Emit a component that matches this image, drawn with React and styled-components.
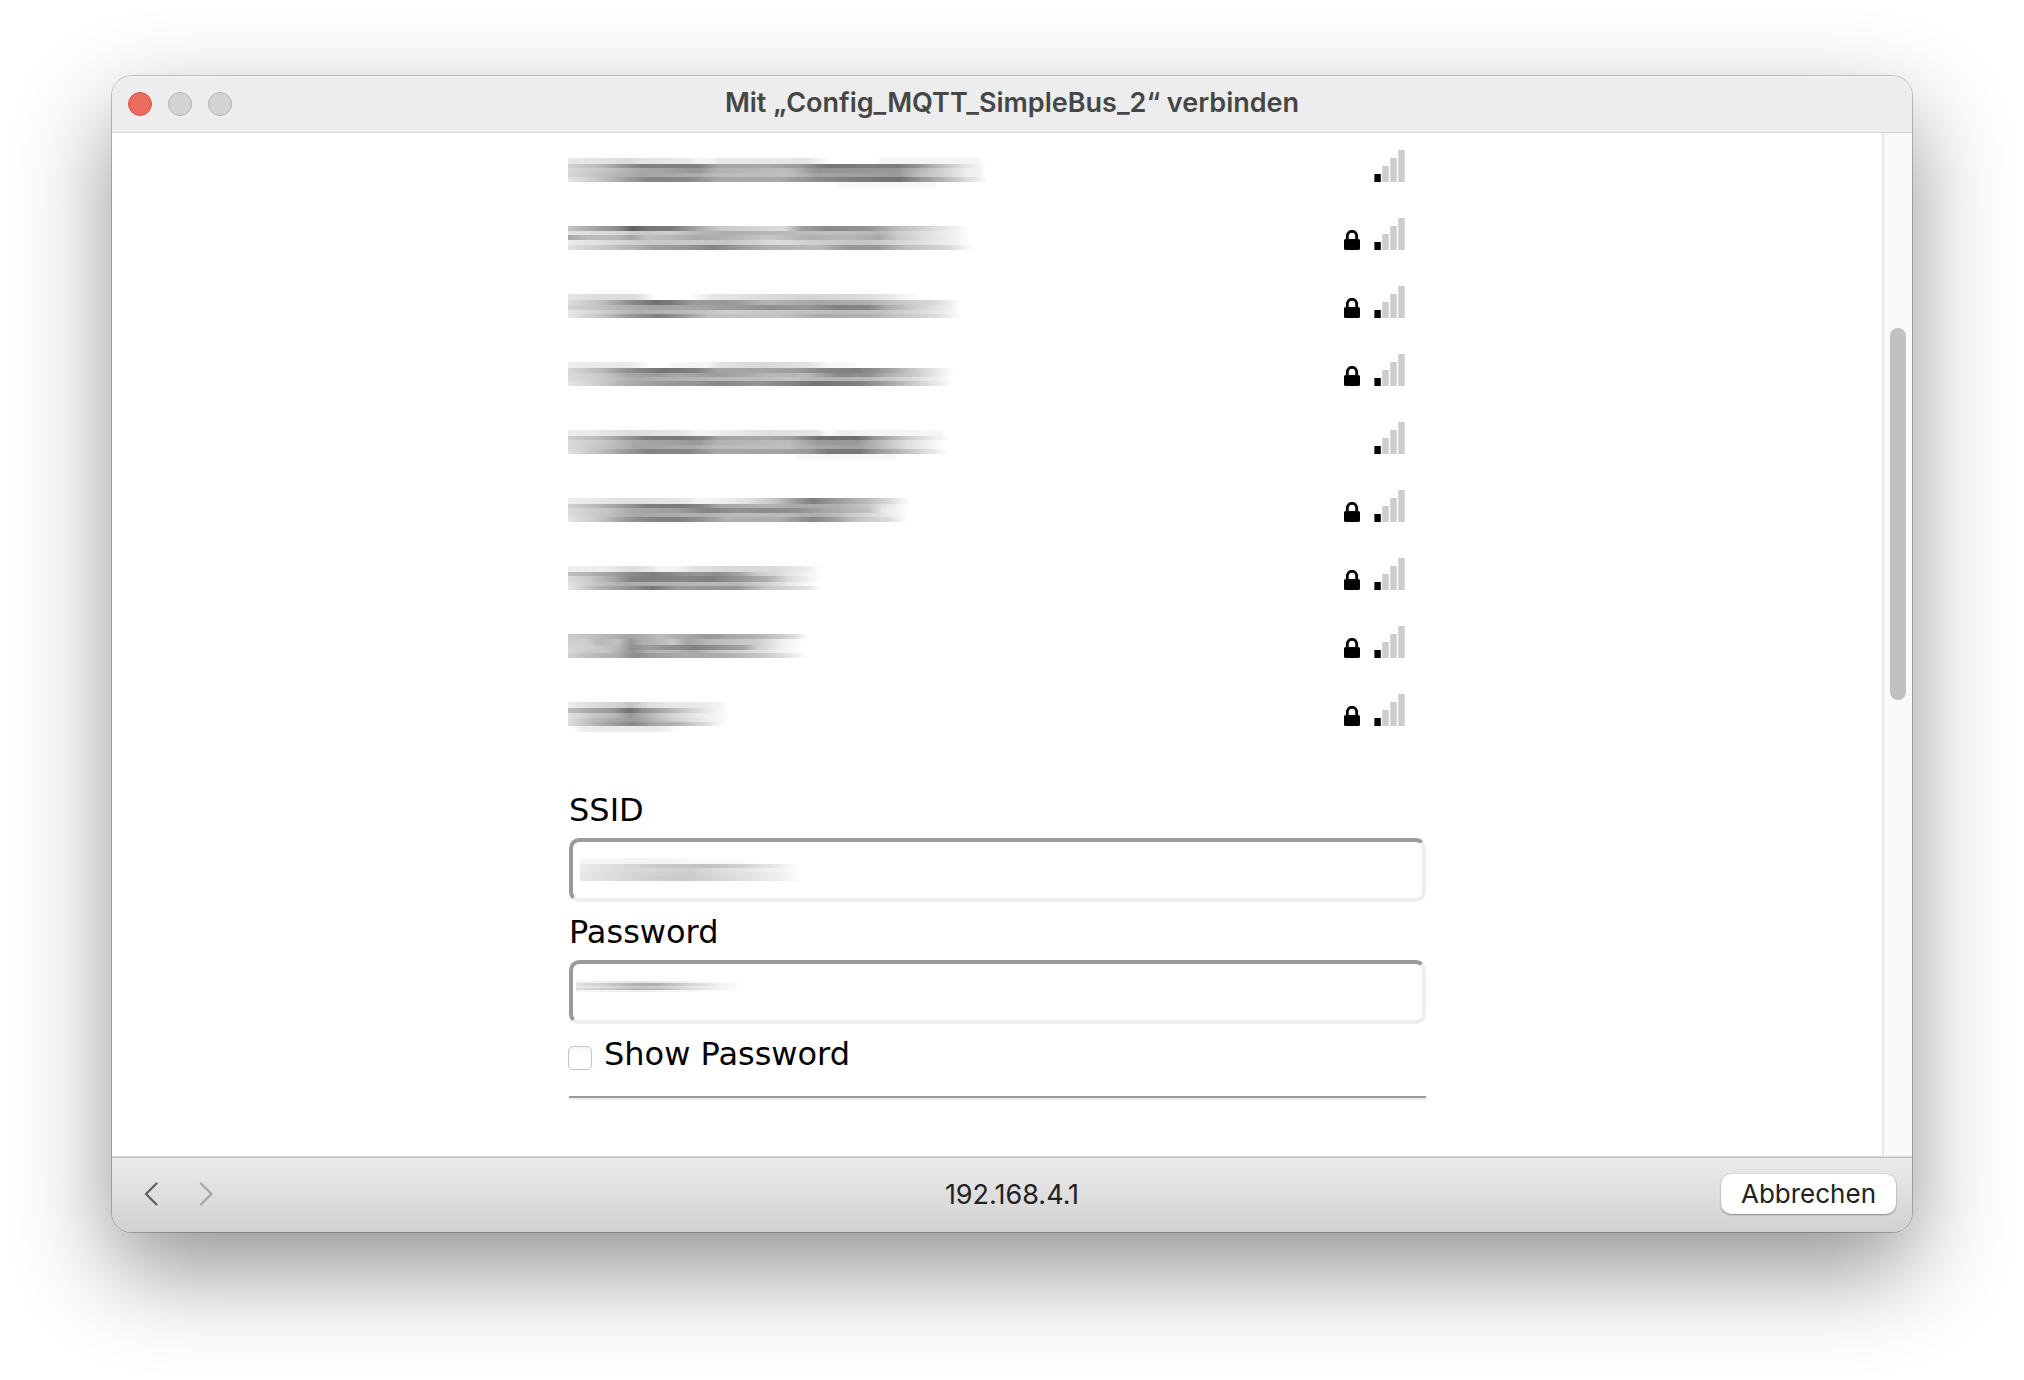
import React, { useState } from "react";
import styled, { createGlobalStyle } from "styled-components";

const GlobalStyle = createGlobalStyle`
  *, *::before, *::after { box-sizing: border-box; }
  body { margin: 0; background: #fff; }
`;

const systemFont = `Inter, "Liberation Sans", sans-serif`;
const pageFont = `Verdana, "DejaVu Sans", sans-serif`;

const Desktop = styled.div`
  display: flex;
  min-height: 100vh;
  padding: 76px 112px 148px;
  background: #fff;
`;

const Window = styled.div`
  flex: 1;
  min-width: 0;
  display: flex;
  flex-direction: column;
  overflow: hidden;
  border-radius: 20px;
  background: #fff;
  font-family: ${systemFont};
  box-shadow: 0 0 0 1px rgba(0, 0, 0, 0.22), 0 38px 96px rgba(0, 0, 0, 0.43);
`;

const TitleBar = styled.header`
  display: grid;
  grid-template-columns: 1fr auto 1fr;
  align-items: center;
  height: 57px;
  padding: 0 16px;
  background: #ededed;
  border-bottom: 1px solid #d4d4d4;
  box-shadow: inset 0 1px 0 #f8f8f8;
`;

const TrafficLights = styled.div`
  display: flex;
  gap: 16px;
`;

const Light = styled.button`
  width: 24px;
  height: 24px;
  padding: 0;
  border-radius: 50%;
  border: 1px solid ${(p) => (p.$active ? "#d5564c" : "#b4b4b4")};
  background: ${(p) => (p.$active ? "#ec6b5f" : "#d3d3d3")};
`;

const Title = styled.h1`
  margin: 0;
  padding-bottom: 2px;
  font-size: 27px;
  line-height: 32px;
  font-weight: 600;
  color: #464646;
  white-space: nowrap;
`;

const Content = styled.div`
  flex: 1;
  display: flex;
  min-height: 0;
`;

const Viewport = styled.main`
  flex: 1;
  display: flex;
  justify-content: center;
  font-family: ${pageFont};
  font-size: 32px;
  line-height: 38px;
  color: #000;
`;

const Column = styled.div`
  width: 858px;
`;

const ScrollTrack = styled.div`
  width: 30px;
  padding: 195px 6px 0;
  background: #fafafa;
  border-left: 2px solid #e8e8e8;
`;

const ScrollThumb = styled.div`
  height: 372px;
  border-radius: 8px;
  background: #c1c1c1;
`;

const Networks = styled.ul`
  margin: 0 0 46px;
  padding: 0;
  list-style: none;
`;

const Network = styled.li`
  display: flex;
  align-items: flex-end;
  gap: 14px;
  height: 68px;
  padding: 0 20px 19px 0;
`;

const Smear = styled.div`
  display: flex;
  flex-direction: column;
  flex: 1;
  height: 24px;
`;

const Band = styled.div`
  flex: none;
  height: ${(p) => p.$height}px;
`;

const Form = styled.form`
  margin: 0;
`;

const Label = styled.label`
  display: block;
  padding-left: 1px;
`;

const Field = styled.div`
  position: relative;
  margin: 9px 0 11px;
  padding-left: 1px;
`;

const TextInput = styled.input`
  display: block;
  width: 100%;
  height: 64px;
  padding: 0 8px;
  border: 4px solid;
  border-color: #9a9a9a #eee #eee #9a9a9a;
  border-radius: 10px;
  background: #fff;
  font: inherit;
  outline: none;
`;

const FieldSmear = styled.div`
  position: absolute;
  top: 20px;
  left: ${(p) => p.$left}px;
  width: ${(p) => p.$width}px;
  pointer-events: none;
`;

const CheckRow = styled.div`
  display: flex;
  gap: 12px;
  align-items: flex-start;
`;

const Checkbox = styled.input`
  appearance: none;
  flex: none;
  width: 24px;
  height: 24px;
  margin: 11px 0 0;
  border: 1px solid #c4c4c4;
  border-radius: 5px;
  background: linear-gradient(#f6f6f6, #fff 35%);
  &:checked { background: #3b82f6; }
`;

const Rule = styled.hr`
  margin: 23px 0 0 1px;
  border: 0;
  border-top: 2px solid #9a9a9a;
  border-bottom: 2px solid #eee;
`;

const Footer = styled.footer`
  display: grid;
  grid-template-columns: 1fr auto 1fr;
  align-items: center;
  height: 75px;
  padding: 0 16px;
  border-top: 1px solid #bfbfbf;
  background: linear-gradient(#ebebeb, #d2d2d2);
  box-shadow: 0 -1px 0 #dedede;
`;

const History = styled.nav`
  display: flex;
  gap: 30px;
  padding: 0 0 3px 12px;
`;

const IconButton = styled.button`
  display: flex;
  padding: 0;
  border: 0;
  background: none;
  color: ${(p) => (p.disabled ? "#a6a6a6" : "#5e5e5e")};
`;

const Address = styled.span`
  font-size: 27px;
  line-height: 32px;
  color: #222;
`;

const CancelButton = styled.button`
  justify-self: end;
  height: 40px;
  margin-bottom: 3px;
  padding: 0 20px;
  border: 0;
  border-radius: 10px;
  background: #fff;
  box-shadow: 0 1px 2px rgba(0, 0, 0, 0.35), 0 0 1px rgba(0, 0, 0, 0.25);
  font-family: inherit;
  font-size: 26px;
  line-height: 38px;
  color: #222;
`;

/* Each band is [height, "x grey, x grey, ..."], x in pixels from the left. */
const networks = [
  {
    locked: false,
    bands: [
      [6, "0 e8,30 e4,62 da,75 e4,120 e8,128 f4,146 f3,150 e8,240 e6,264 fe,308 ff,314 f4,410 f4,415 ff"],
      [4, "0 d2,30 bc,60 90,75 80,130 80,150 a6,200 a8,230 9c,260 76,300 80,330 7a,350 94,370 b8,395 e0,421 ff"],
      [5, "0 da,40 c4,70 aa,130 96,150 b2,220 bc,250 92,330 98,350 b4,380 d8,400 ee,412 f2,416 ff"],
      [4, "0 d6,40 bc,70 a6,130 ac,150 bc,220 c0,250 a4,330 9c,350 bc,380 d8,400 f0,412 f2,416 ff"],
      [5, "0 e4,30 c8,60 9c,80 86,120 88,150 a6,210 a8,250 8c,290 7c,330 72,350 90,390 cc,421 ff"],
      [6, "268 ff,272 f7,365 f7,370 ff"],
    ],
  },
  {
    locked: true,
    bands: [
      [5, "0 c4,30 a0,50 8c,64 62,80 76,105 7c,125 a0,150 c8,215 dc,235 9e,260 8a,300 94,330 bc,370 e0,402 ff"],
      [4, "0 e4,55 d4,65 c8,100 cc,130 b8,160 ac,220 ba,280 c0,310 b4,330 cc,360 e2,385 f0,402 ff"],
      [5, "0 a8,20 bc,50 b8,63 a4,80 c0,130 aa,160 b2,200 c8,240 b0,280 b8,310 a8,330 c8,360 e0,380 ea,400 ff"],
      [5, "0 ec,50 d8,80 c8,120 c8,160 c4,210 dc,250 cc,300 c4,330 d4,360 e4,385 f0,402 ff"],
      [5, "0 e0,30 cc,65 b4,85 9e,120 96,145 82,165 94,200 b0,250 ba,280 96,310 98,340 c0,380 d8,406 ff"],
    ],
  },
  {
    locked: true,
    bands: [
      [6, "0 e6,30 dc,68 dc,88 ff,120 ff,145 e6,200 dc,240 d4,300 dc,320 e6,352 ff"],
      [5, "0 dc,30 c4,60 90,75 7e,90 70,110 82,125 9c,160 98,200 b4,250 a6,300 b0,340 cc,370 dc,394 ff"],
      [5, "0 d4,30 c4,65 ac,90 a2,120 a8,160 9c,200 90,240 96,270 80,300 86,320 aa,350 d0,380 ee,394 ff"],
      [4, "0 e8,40 cc,70 b0,110 b8,160 ce,220 c4,270 bc,310 c0,350 da,380 f0,392 ff"],
      [4, "0 e8,30 c8,60 9c,90 80,110 92,140 c0,210 c4,250 ac,300 b0,330 c4,370 dc,394 ff"],
    ],
  },
  {
    locked: true,
    bands: [
      [6, "0 ec,60 e8,82 ff,98 ff,105 f6,140 f4,152 e2,195 d8,240 e2,262 f8,284 f8,290 ff"],
      [5, "0 d8,30 bc,60 90,85 7c,95 74,130 82,150 a4,200 a4,230 9c,260 84,290 7e,320 a0,350 d0,386 ff"],
      [4, "0 dc,30 cc,60 a8,90 9c,110 a8,150 9c,200 b6,240 b8,270 88,300 90,320 b0,350 d0,386 ff"],
      [4, "0 dc,30 cc,70 ac,110 b0,150 b8,220 c4,260 b4,300 b8,340 d8,370 f0,384 ff"],
      [5, "0 e6,30 ce,60 ac,100 98,130 92,150 88,190 94,220 86,250 74,290 80,320 a4,350 d0,386 ff"],
    ],
  },
  {
    locked: false,
    bands: [
      [6, "0 ee,30 e8,62 dc,120 e8,128 f4,146 f2,154 ec,200 e0,250 e6,260 fa,275 ee,300 f4,372 f6,378 ff"],
      [4, "0 d0,30 ba,60 94,80 7c,110 78,135 86,150 a4,200 a8,225 9c,250 72,290 6e,310 9c,340 cc,382 ff"],
      [5, "0 dc,40 c4,65 a8,130 98,150 b2,220 bc,250 9a,290 98,310 b8,340 e0,360 ee,375 ff"],
      [4, "0 da,40 c0,70 a4,130 ac,150 bc,220 c0,250 a6,290 a0,310 b8,340 e0,360 f0,375 ff"],
      [5, "0 e0,30 c0,60 98,80 84,120 86,150 a6,210 a4,240 98,260 7a,290 76,310 98,340 c4,382 ff"],
      [6, "226 ff,230 f7,326 f7,330 ff"],
    ],
  },
  {
    locked: true,
    bands: [
      [6, "0 ee,30 e8,62 de,120 e8,128 f4,150 f2,180 e0,205 c8,225 a0,245 7e,265 98,300 bc,320 d8,342 ff"],
      [4, "0 d0,30 b8,60 96,80 7e,110 7a,135 86,150 a6,200 b4,230 a8,270 b0,300 c8,320 e8,342 ff"],
      [5, "0 dc,40 c4,65 a8,110 9c,140 84,170 90,200 8c,230 90,260 a8,300 c0,315 e8,342 ff"],
      [4, "0 dc,40 c0,70 a8,130 b0,170 bc,220 b8,250 ac,280 c8,310 e0,342 ff"],
      [5, "0 e4,30 c8,60 98,80 86,110 80,130 90,160 b0,210 ac,245 88,265 9c,290 c4,320 dc,340 ff"],
    ],
  },
  {
    locked: true,
    bands: [
      [6, "0 f0,40 ec,62 dc,85 e8,92 f4,110 f2,126 e2,160 d8,210 dc,236 ea,254 ff"],
      [4, "0 c0,30 ac,60 8e,85 7c,110 90,130 96,150 8e,170 a0,190 cc,220 e4,254 ff"],
      [6, "0 dc,20 cc,50 9e,63 84,80 80,115 86,145 80,170 94,200 b0,220 d8,240 f0,254 ff"],
      [4, "0 e4,30 c4,60 ac,90 b0,130 b8,170 b8,200 d4,230 f0,250 ff"],
      [4, "0 e8,30 b4,60 94,85 78,110 9c,140 94,170 98,200 c8,240 e2,254 ff"],
    ],
  },
  {
    locked: true,
    bands: [
      [5, "0 ce,30 be,60 a4,70 a8,90 bc,115 ac,140 98,160 a6,190 b4,215 cc,230 e4,240 ff"],
      [6, "0 d0,20 ce,30 b8,50 c0,63 98,75 b0,90 b8,105 c8,120 a4,140 b8,170 c4,190 d0,215 f0,238 ff"],
      [5, "0 d4,20 d0,50 b8,64 90,80 9c,110 8c,125 80,145 8c,175 a4,190 d0,215 f2,234 ff"],
      [3, "0 d8,20 cc,40 c4,65 94,80 b0,100 b8,125 a8,150 c4,190 dc,215 f2,234 ff"],
      [5, "0 d0,30 b8,50 ac,66 8c,80 98,105 a8,130 a8,160 b0,190 c4,215 dc,240 ff"],
    ],
  },
  {
    locked: true,
    bands: [
      [6, "0 ec,25 dc,55 d0,63 c4,80 dc,100 e8,130 e8,150 f2,161 ff"],
      [5, "0 be,20 a8,45 98,62 70,75 90,95 a8,115 c8,140 e8,160 ff"],
      [5, "0 e4,25 c8,50 b4,62 98,80 b4,100 d0,130 ec,150 f4,162 ff"],
      [4, "0 e0,25 bc,50 a4,65 98,85 b4,110 d4,140 ee,162 ff"],
      [4, "0 dc,25 b8,50 98,64 88,85 a4,110 b4,135 d8,158 ff"],
      [6, "4 ff,12 f0,30 ea,90 ea,112 ff"],
    ],
  },
];

const ssidBands = [
  [6, "0 f6,90 f4,110 fa,160 fb,180 ff"],
  [4, "0 ec,40 dc,80 c8,110 c4,130 c2,160 d0,190 e4,222 ff"],
  [4, "0 ec,40 dc,80 d6,110 d0,140 de,170 e8,200 f4,222 ff"],
  [4, "0 e8,50 d6,80 d2,110 cc,140 dc,170 e4,200 f0,222 ff"],
  [5, "0 e8,40 da,70 ce,110 ca,140 d6,170 e2,200 ee,222 ff"],
];

const passwordBands = [
  [1, "0 ff"],
  [2, "0 f4,65 e4,100 f0,150 ff"],
  [3, "0 e0,30 cc,60 b0,80 b0,110 d0,140 ee,168 ff"],
  [2, "0 ec,30 dc,65 c8,90 d4,120 e8,168 ff"],
  [2, "0 dc,30 cc,60 b6,80 ba,110 d8,140 f0,166 ff"],
  [2, "0 f6,65 ec,100 f6,150 ff"],
];

function gradient(stops) {
  const list = stops.split(",").map((stop) => {
    const [x, grey] = stop.split(" ");
    return `#${grey}${grey}${grey} ${x}px`;
  });
  if (list.length === 1) list.push(list[0]);
  return `linear-gradient(90deg, ${list.join(", ")})`;
}

function Bands({ bands }) {
  return bands.map(([height, stops], i) => (
    <Band key={i} $height={height} style={{ backgroundImage: gradient(stops) }} />
  ));
}

function LockIcon() {
  return (
    <svg width="16" height="20" viewBox="0 0 16 20" aria-label="geschützt">
      <path d="M3.300 10V6.200a4.700 4.900 0 0 1 9.400 0V10" fill="none" stroke="#000" strokeWidth="2.8" />
      <rect x="0" y="9" width="16" height="11" rx="1.6" fill="#000" />
    </svg>
  );
}

function SignalIcon() {
  return (
    <svg width="32" height="32" viewBox="0 0 32 32" aria-hidden="true">
      <rect x="0.4" y="24" width="6.400" height="8" fill="#000" />
      <rect x="8.300" y="16" width="6.400" height="16" fill="#ccc" />
      <rect x="16.300" y="8" width="6.400" height="24" fill="#ccc" />
      <rect x="24.300" y="0" width="6.400" height="32" fill="#ccc" />
    </svg>
  );
}

function Chevron({ d }) {
  return (
    <svg width="24" height="24" viewBox="0 0 24 24" fill="none" stroke="currentColor" strokeWidth="2.2" strokeLinecap="round" strokeLinejoin="round" aria-hidden="true">
      <path d={d} />
    </svg>
  );
}

export default function App() {
  const [showPassword, setShowPassword] = useState(false);

  return (
    <Desktop>
      <GlobalStyle />
      <Window>
        <TitleBar>
          <TrafficLights>
            <Light $active aria-label="Schließen" />
            <Light aria-label="Minimieren" />
            <Light aria-label="Vergrößern" />
          </TrafficLights>
          <Title>Mit „Config_MQTT_SimpleBus_2“ verbinden</Title>
        </TitleBar>

        <Content>
          <Viewport>
            <Column>
              <Networks>
                {networks.map((network, i) => (
                  <Network key={i}>
                    <Smear>
                      <Bands bands={network.bands} />
                    </Smear>
                    {network.locked && <LockIcon />}
                    <SignalIcon />
                  </Network>
                ))}
              </Networks>

              <Form onSubmit={(e) => e.preventDefault()}>
                <Label htmlFor="ssid">SSID</Label>
                <Field>
                  <TextInput id="ssid" type="text" />
                  <FieldSmear $left={12} $width={224}>
                    <Bands bands={ssidBands} />
                  </FieldSmear>
                </Field>
                <Label htmlFor="password">Password</Label>
                <Field>
                  <TextInput id="password" type={showPassword ? "text" : "password"} />
                  <FieldSmear $left={8} $width={168}>
                    <Bands bands={passwordBands} />
                  </FieldSmear>
                </Field>
                <CheckRow>
                  <Checkbox
                    id="show"
                    type="checkbox"
                    checked={showPassword}
                    onChange={(e) => setShowPassword(e.target.checked)}
                  />
                  <label htmlFor="show">Show Password</label>
                </CheckRow>
                <Rule />
              </Form>
            </Column>
          </Viewport>
          <ScrollTrack>
            <ScrollThumb />
          </ScrollTrack>
        </Content>

        <Footer>
          <History>
            <IconButton type="button" aria-label="Zurück">
              <Chevron d="M16.500 1.500 6 12l10.500 10.500" />
            </IconButton>
            <IconButton type="button" disabled aria-label="Vorwärts">
              <Chevron d="M7 1.500 17.500 12 7 22.500" />
            </IconButton>
          </History>
          <Address>192.168.4.1</Address>
          <CancelButton type="button">Abbrechen</CancelButton>
        </Footer>
      </Window>
    </Desktop>
  );
}
